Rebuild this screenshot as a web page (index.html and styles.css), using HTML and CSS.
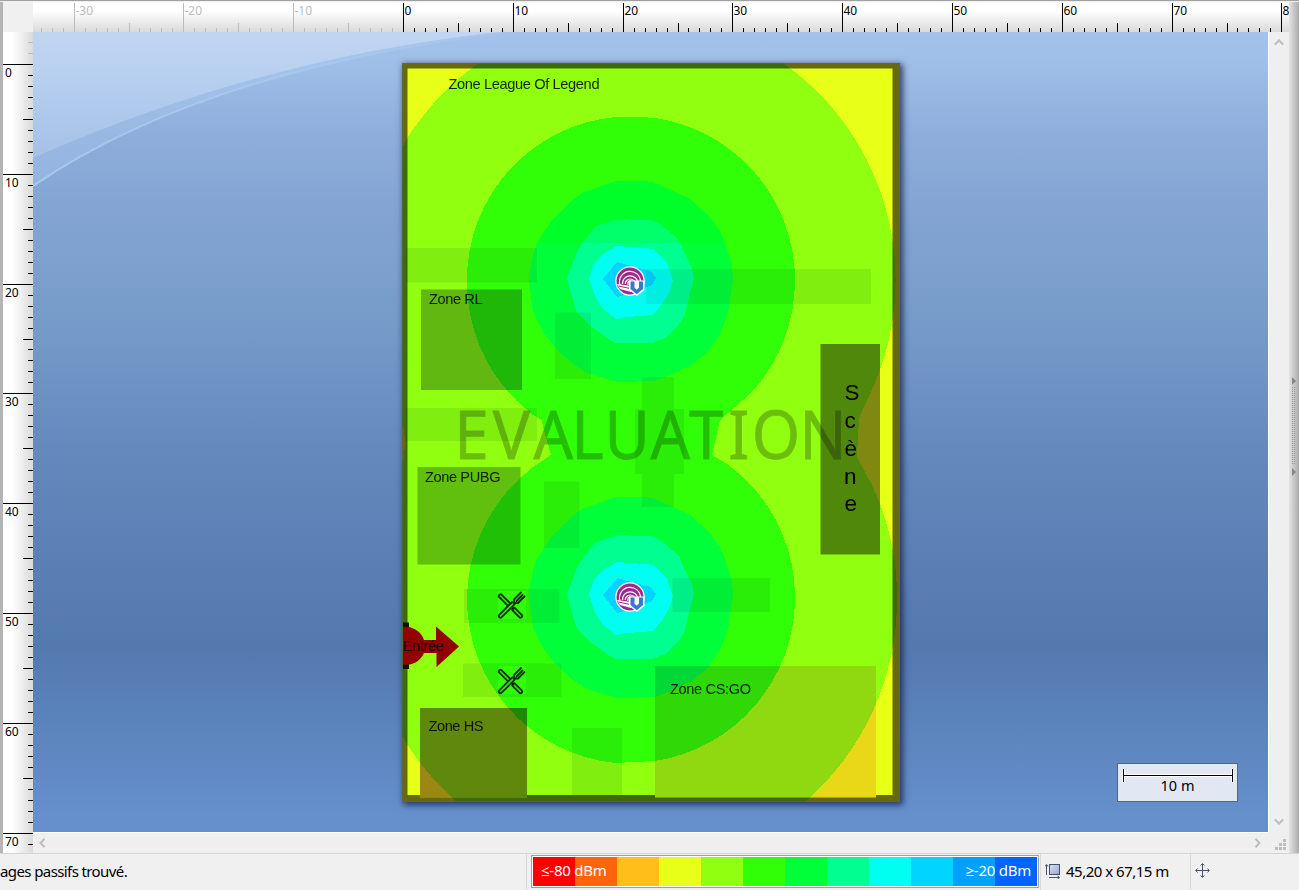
FILE: index.html
```html
<!DOCTYPE html>
<html lang="fr">
<head>
<meta charset="utf-8">
<title>Couverture Wi-Fi</title>
<link rel="stylesheet" href="styles.css">
</head>
<body>
<div class="app">
  <div class="workspace">
    <div class="splitter-left"></div>
    <div class="editor">
      <div class="corner"></div>
      <svg class="ruler ruler-top" id="rulerTop" width="1256" height="30" viewBox="33 2 1256 30"></svg>
      <svg class="ruler ruler-side" id="rulerSide" width="30" height="821" viewBox="3 32 30 821"></svg>
      <div class="viewport">
        <div class="canvas">
          <svg class="glare" width="1235" height="800" viewBox="33 32 1235 800">
            <defs>
              <linearGradient id="glareFill" x1="0" y1="32" x2="0" y2="187" gradientUnits="userSpaceOnUse">
                <stop offset="0" stop-color="#fff" stop-opacity=".3"/>
                <stop offset=".5" stop-color="#d5e8ff" stop-opacity=".42"/>
                <stop offset="1" stop-color="#d5f0ff" stop-opacity=".3"/>
              </linearGradient>
              <linearGradient id="glareRim" x1="33" y1="0" x2="490" y2="0" gradientUnits="userSpaceOnUse">
                <stop offset="0" stop-color="#bcd8f8" stop-opacity=".55"/>
                <stop offset="1" stop-color="#c4dcf8" stop-opacity=".1"/>
              </linearGradient>
            </defs>
            <path d="M33 32H500Q260 58 33 158Z" fill="url(#glareFill)"/>
            <path d="M33 158Q260 58 500 32Q200 72 33 187Z" fill="#b4d0f4" opacity=".3"/>
            <path d="M33 186Q200 72 500 33" fill="none" stroke="url(#glareRim)" stroke-width="2"/>
          </svg>
          <svg class="map" width="498" height="739" viewBox="402 63 498 739">
            <defs>
              <path id="ring4" d="M640 181 616 181 582 193 570 202 553 219 545 230 537 243 533 255 529 275 529 282 533 312 543 332 557 350 573 364 587 373 613 381 618 382 655 381 670 375 690 366 707 353 720 334 728 313 733 280 732 265 725 243 720 231 710 217 690 199 673 191 653 182Z"/>
              <clipPath id="ring4clip"><use href="#ring4"/></clipPath>
              <g id="signal">
                <use href="#ring4" fill="#00ff38"/>
                <path fill="#00ff90" d="M640 220 617 219 605 223 595 227 583 242 577 252 567 278 570 290 577 313 592 327 607 338 615 343 653 343 665 338 677 327 685 315 687 305 694 278 692 268 683 250 679 240 665 228 657 222 650 220Z"/>
                <path fill="#00fff0" d="M617 246 645 248 653 249 667 262 673 280 669 293 663 303 653 315 628 317 616 319 602 308 595 296 589 279 594 263 603 254Z"/>
                <path fill="#00d4ff" d="M617 262 603 279 617 297 630 294 652 285 656 278 651 271 635 267Z"/>
              </g>
              <g id="antenna">
                <circle cx="630" cy="281" r="14.7" fill="#fff"/>
                <circle cx="630" cy="281" r="13.5" fill="#a0288c"/>
                <g fill="none" stroke="#fff" stroke-width="1.2">
                  <path d="M620 285a10.5 10.5 0 1 1 20.5-3"/>
                  <path d="M622.5 284a7.7 7.7 0 1 1 15.4-1"/>
                  <path d="M625.2 284a5 5 0 1 1 10 0"/>
                  <path d="M628 285v-2a2.2 2.200 0 0 1 4.400 0v2"/>
                </g>
                <path d="M617 284 631 286v6l-11-3z" fill="#fff"/>
                <path d="M618.500 286 630 288.500" stroke="#a0288c" stroke-width="1"/>
                <path d="M629 280.500h15.500v9.500l-7.500 6-8-6z" fill="#fff"/>
                <path d="M630.500 281.500v7.500l6.200 5.300 6.300-5.300v-7.500h-4v6l-2.300 2.200-2.200-2.200v-6z" fill="#3478d0"/>
              </g>
              <g id="food">
                <g fill="none" stroke-linecap="round">
                  <path d="M500.500 596 509.500 605M514 609.500 520.500 616" stroke="#102c08" stroke-width="5.200"/>
                  <path d="M500.500 596 509 604.500M514.500 610 520.500 616" stroke="#30e80c" stroke-width="1.700"/>
                  <path d="M500.500 616 513 603.500" stroke="#102c08" stroke-width="5.200"/>
                  <path d="M500.500 616 512.500 604" stroke="#30e80c" stroke-width="1.700"/>
                  <path d="M514 599.500 521 592.500M516.500 601 522.500 595M518 603 524.500 596.500M514 599.500Q513.500 604 518 603" stroke="#102c08" stroke-width="1.800"/>
                </g>
              </g>
            </defs>

            <g shape-rendering="crispEdges">
              <rect x="402" y="63" width="498" height="739" fill="#e8ff18"/>
              <path fill="#90ff10" d="M479 63A264 264 0 0 0 402 147V425L404 430 405 443 404 458 402 463V736A268 268 0 0 0 457 802H805A268 268 0 0 0 897 600A266 266 0 0 0 873 487L857 457 859 418 870 394A266 266 0 0 0 783 63Z"/>
              <path fill="#30ff08" d="M616 117A163.500 163.500 0 0 0 467 280A165.500 165.500 0 0 0 517 401L533 415 542 420 543 427 551 455 533 467 517 481A165.500 165.500 0 0 0 467 598A165 165 0 0 0 615 763L655 761A165 165 0 0 0 795 598A165 165 0 0 0 743 477L727 464 712 455 720 420 750 394A165.500 165.500 0 0 0 795 280A164 164 0 0 0 655 118L640 117Z"/>
              <use href="#signal"/>
              <use href="#signal" y="316"/>
              <rect x="529" y="180" width="205" height="63" fill="#00ff00" opacity=".26" clip-path="url(#ring4clip)"/>
            </g>

            <g class="tables">
              <path d="M406 248h131v34.500h-131zM646 269h225v35h-225zM555 312.500h36v66.500h-36zM406 408h131v33h-131zM544 481.500h35.500v66.500h-35.500zM642 377h32v32h10v65h-10v33h-32v-33h-7v-65h7zM672.500 578h97.500v34h-97.500zM572 728h50v67h-50z"/>
              <path fill-rule="evenodd" d="M464 589h95.500v34h-95.500zM498 591v28h28v-28zM463 663.500h98.500v33.500h-98.500zM498 666v28h28v-28z"/>
            </g>
            <path class="walls" fill-rule="evenodd" d="M402 63H900V802H402ZM407.500 68.500V795H420V797.500H527V795H655V797.500H876V795H892.500V68.500Z"/>
            <path class="wall-edge" d="M402.500 63.500H899.500V801.500H402.500Z"/>
            <rect class="zone zone-rl" x="421" y="289.500" width="101" height="100.500"/>
            <rect class="zone zone-pubg" x="417.500" y="467" width="103" height="97.500"/>
            <rect class="zone zone-hs" x="420" y="708" width="107" height="89.500"/>
            <rect class="zone zone-csgo" x="655" y="666" width="221" height="131.500"/>
            <rect class="zone stage" x="820.500" y="344" width="59.500" height="210.500"/>

            <path fill="#101000" d="M403 622.500h6v5h-6zM403 664h6v5h-6z"/>
            <path fill="#930000" d="M403 627a19.200 19.200 0 0 1 21 13h12v-13.500L459 646.500 436.500 667V653H424a19.200 19.200 0 0 1-21 11.500z"/>

            <g class="labels">
              <text x="448.500" y="89" textLength="151">Zone League Of Legend</text>
              <text x="429" y="303.500" textLength="53.500">Zone RL</text>
              <text x="425" y="482" textLength="75.500">Zone PUBG</text>
              <text x="670" y="694" textLength="81">Zone CS:GO</text>
              <text x="428.500" y="731" textLength="55">Zone HS</text>
              <text x="403" y="651" textLength="41">Entrée</text>
            </g>
            <text class="stage-name"><tspan x="844.500" y="400">S</tspan><tspan x="844.500" y="428">c</tspan><tspan x="844.500" y="455.500">è</tspan><tspan x="844" y="483.500">n</tspan><tspan x="844.500" y="511">e</tspan></text>

            <use href="#food"/>
            <use href="#food" y="75.500"/>
            <text class="watermark" transform="translate(460 459) scale(.92 1)" x="-6.200 35.500 80 121 157 207 249 291.500 317 369">EVALUATION</text>
            <use href="#antenna"/>
            <use href="#antenna" y="316"/>
          </svg>
          <div class="scale">
            <svg width="119" height="20" viewBox="1118 764 119 20">
              <path d="M1123.500 769V782M1232.500 769V782M1123 775.500H1233" stroke="#fff" stroke-width="3"/>
              <path d="M1123.500 769V782M1232.500 769V782M1123 775.500H1233" stroke="#000"/>
            </svg>
            <span>10 m</span>
          </div>
        </div>
        <div class="scroll-v">
          <svg width="10" height="7" viewBox="0 0 10 7"><path d="M.8 5.500 5 1.500 9.200 5.500"/></svg>
          <svg width="10" height="7" viewBox="0 0 10 7"><path d="M.8 1.500 5 5.500 9.200 1.500"/></svg>
        </div>
        <div class="scroll-h">
          <svg width="7" height="10" viewBox="0 0 7 10"><path d="M5.500 .8 1.500 5 5.500 9.200"/></svg>
          <svg width="7" height="10" viewBox="0 0 7 10"><path d="M1.500 .8 5.500 5 1.500 9.200"/></svg>
        </div>
        <div class="grip">
          <svg width="11" height="11" viewBox="0 0 11 11"><path fill="#bdbdbd" d="M8 0h3v3H8zM4 4h3v3H4zM8 4h3v3H8zM0 8h3v3H0zM4 8h3v3H4zM8 8h3v3H8z"/></svg>
        </div>
      </div>
    </div>
    <div class="splitter-right">
      <svg width="6" height="100" viewBox="0 0 6 100">
        <path fill="#858585" d="M1 0 5 4 1 8zM1 91 5 95 1 99z"/>
        <path d="M1.500 10V88M3.500 10V88" stroke="#999" stroke-dasharray="1 1"/>
      </svg>
    </div>
  </div>
  <div class="status">
    <div class="message"><span>ages passifs trouvé.</span></div>
    <div class="legend-cell">
      <div class="legend">
        <i class="c1"></i><i class="c2"></i><i class="c3"></i><i class="c4"></i><i class="c5"></i><i class="c6"></i><i class="c7"></i><i class="c8"></i><i class="c9"></i><i class="c10"></i><i class="c11"></i><i class="c12"></i>
        <div class="legend-text"><span>≤-80 dBm</span><span>≥-20 dBm</span></div>
      </div>
    </div>
    <div class="size-cell">
      <svg width="16" height="16" viewBox="0 0 16 16">
        <defs><linearGradient id="sq" x1="0" y1="0" x2="1" y2="1"><stop offset="0" stop-color="#dde2f2"/><stop offset="1" stop-color="#97a5cc"/></linearGradient></defs>
        <rect x="4.500" y="1.500" width="10" height="10" fill="url(#sq)" stroke="#46506e"/>
        <path d="M1.500 2V12M0 3.500 1.500 1.500 3 3.500M4 14.500H14M12.500 13 14.500 14.500 12.500 16" fill="none" stroke="#46506e"/>
      </svg>
      <span>45,20 x 67,15 m</span>
    </div>
    <div class="move-cell">
      <svg width="15" height="15" viewBox="0 0 15 15"><path d="M7.500 1V14M1 7.500H14M5.500 2.500 7.500 .7 9.500 2.500M5.500 12.500 7.500 14.300 9.500 12.500M2.500 5.500 .7 7.500 2.500 9.500M12.500 5.500 14.300 7.500 12.500 9.500" fill="none" stroke="#46506e"/></svg>
    </div>
  </div>
</div>
<script src="rulers.js"></script>
</body>
</html>
```
FILE: styles.css
```css
* { box-sizing: border-box; }
body {
  margin: 0;
  width: 1299px;
  height: 890px;
  overflow: hidden;
  background: #efefef;
  color: #000;
  font-family: "Noto Sans", "Open Sans", sans-serif;
}
svg { display: block; }
.app {
  display: flex;
  flex-direction: column;
  height: 890px;
  padding-top: 2px;
  background: linear-gradient(#a0a0a0 1px, #efefef 1px);
}
.workspace { display: flex; height: 851px; }
.splitter-left { width: 3px; background: #b5b5b5; }
.editor {
  display: grid;
  grid-template: 30px 821px / 30px 1256px;
}
.corner { background: #f0f0f0; }
.ruler-top { background: linear-gradient(#fff 30%, #dadada); }
.ruler-side { background: linear-gradient(to right, #fff 30%, #dadada); }
.ruler text {
  font: 12px "Noto Sans", sans-serif;
  fill: #000;
}
.ruler .tick { stroke: #000; stroke-width: 1; }
.ruler .tick.off { stroke: #bcbcbc; }
.ruler text.off { fill: #bcbcbc; }
.viewport {
  display: grid;
  grid-template: 800px 21px / 1235px 21px;
  background: #efefef;
}
.canvas {
  position: relative;
  background: linear-gradient(#a4c3eb 0, #9dbde7 5%, #8eaddb 13%, #84a5d3 22%, #789cca 35%, #6386bb 55%, #5479af 77%, #6590cc 98%);
}
.glare { position: absolute; inset: 0; }
.map {
  position: absolute;
  left: 369px;
  top: 31px;
  isolation: isolate;
  box-shadow: 2px 2px 6px 1px rgba(20, 30, 70, .75);
}
.tables { fill: #e2eef0; mix-blend-mode: multiply; }
.walls { fill: #716999; mix-blend-mode: multiply; }
.wall-edge { fill: none; stroke: #5a684c; stroke-width: 1; opacity: .6; }
.zone { mix-blend-mode: multiply; }
.zone-rl { fill: #aab8ff; }
.zone-pubg { fill: #aac0d0; }
.zone-hs { fill: #aa88d0; }
.zone-csgo { fill: #ffd8ff; }
.stage { fill: #8e88c0; }
.labels text {
  font: 14.600px "Liberation Sans", Arial, sans-serif;
  fill: #000;
  fill-opacity: .85;
}
.stage-name { font: 22.500px "Liberation Sans", Arial, sans-serif; }
.watermark {
  font: 67.500px "Noto Sans", sans-serif;
  fill: #000;
  stroke: #000;
  stroke-width: .8;
  opacity: .25;
}
.scale {
  position: absolute;
  right: 30px;
  bottom: 30px;
  width: 121px;
  height: 39px;
  border: 1px solid #56657a;
  background: #e1e8f4;
  font-size: 14.500px;
  line-height: 16px;
  text-align: center;
}
.scale span { display: block; margin-top: -7px; }
.scroll-v {
  display: flex;
  flex-direction: column;
  align-items: center;
  justify-content: space-between;
  padding: 7px 0 7px;
  border-left: 1px solid #fff;
}
.scroll-h {
  display: flex;
  align-items: center;
  justify-content: space-between;
  padding: 0 7px 0 6px;
  border-top: 1px solid #fff;
}
.scroll-v path, .scroll-h path { fill: none; stroke: #bdbdbd; stroke-width: 2; }
.grip { padding: 7px 0 0 7px; }
.splitter-right {
  width: 10px;
  padding: 375px 0 0 2px;
  background: linear-gradient(to right, #e4e4e4, #aaa);
}
.status {
  display: flex;
  height: 37px;
  border-top: 1px solid #d5d5d5;
  background: #f0f0f0;
  font-size: 15px;
  line-height: 34px;
}
.message {
  width: 527px;
  border-right: 1px solid #d9d9d9;
  white-space: nowrap;
}
.message span { letter-spacing: -.6px; }
.legend-cell {
  width: 514px;
  padding: 1px 0 0 4px;
  border-right: 1px solid #d9d9d9;
}
.legend {
  position: relative;
  display: flex;
  width: 508px;
  height: 33px;
  padding: 1px;
  border: 1px solid #a0a0a0;
  background: #fff;
}
.legend i { flex: 1; }
.legend-text {
  position: absolute;
  inset: 0;
  display: flex;
  justify-content: space-between;
  padding: 0 7px 0 9px;
  color: #fff;
  line-height: 29px;
  letter-spacing: -.25px;
}
.c1 { background: #ff0000; }
.c2 { background: #ff6408; }
.c3 { background: #ffbe18; }
.c4 { background: #e8ff18; }
.c5 { background: #90ff10; }
.c6 { background: #30ff08; }
.c7 { background: #00ff38; }
.c8 { background: #00ff90; }
.c9 { background: #00fff0; }
.c10 { background: #00d4ff; }
.c11 { background: #00a0ff; }
.c12 { background: #0064ff; }
.size-cell {
  display: flex;
  width: 150px;
  gap: 5px;
  padding-left: 4px;
  border-right: 1px solid #d9d9d9;
  white-space: nowrap;
  letter-spacing: -.5px;
}
.size-cell svg { margin-top: 9px; }
.move-cell { padding: 9px 0 0 4px; }
```
FILE: rulers.js
```javascript
// Draws the metre rulers: one tick per metre, longer every 5, labelled every 10.
const NS = "http://www.w3.org/2000/svg";
const STEP = 10.98;

function add(parent, name, attrs, text) {
  const el = document.createElementNS(NS, name);
  for (const key in attrs) el.setAttribute(key, attrs[key]);
  if (text !== undefined) el.textContent = text;
  parent.appendChild(el);
}

function tickLength(n) {
  if (n % 10 === 0) return 30;
  return n % 5 === 0 ? 9.5 : 4.5;
}

const topRuler = document.getElementById("rulerTop");
for (let n = -33; n <= 80; n++) {
  const x = 403 + Math.round(n * STEP);
  const off = n < 0 ? " off" : "";
  const start = n % 10 === 0 ? 3 : 32 - Math.floor(tickLength(n));
  add(topRuler, "path", { d: `M${x + 0.5} ${start}V32`, class: "tick" + off });
  if (n % 10 === 0) add(topRuler, "text", { x: x + 1.5, y: 15, class: off.trim() }, n);
}

const sideRuler = document.getElementById("rulerSide");
for (let n = -2; n <= 71; n++) {
  const y = 64 + Math.round(n * STEP);
  const off = n < 0 ? " off" : "";
  const start = n % 10 === 0 ? 3 : 33 - Math.round(tickLength(n));
  add(sideRuler, "path", { d: `M${start} ${y + 0.5}H33`, class: "tick" + off });
  if (n % 10 === 0) add(sideRuler, "text", { x: 5, y: y + 13 }, n);
}
```
